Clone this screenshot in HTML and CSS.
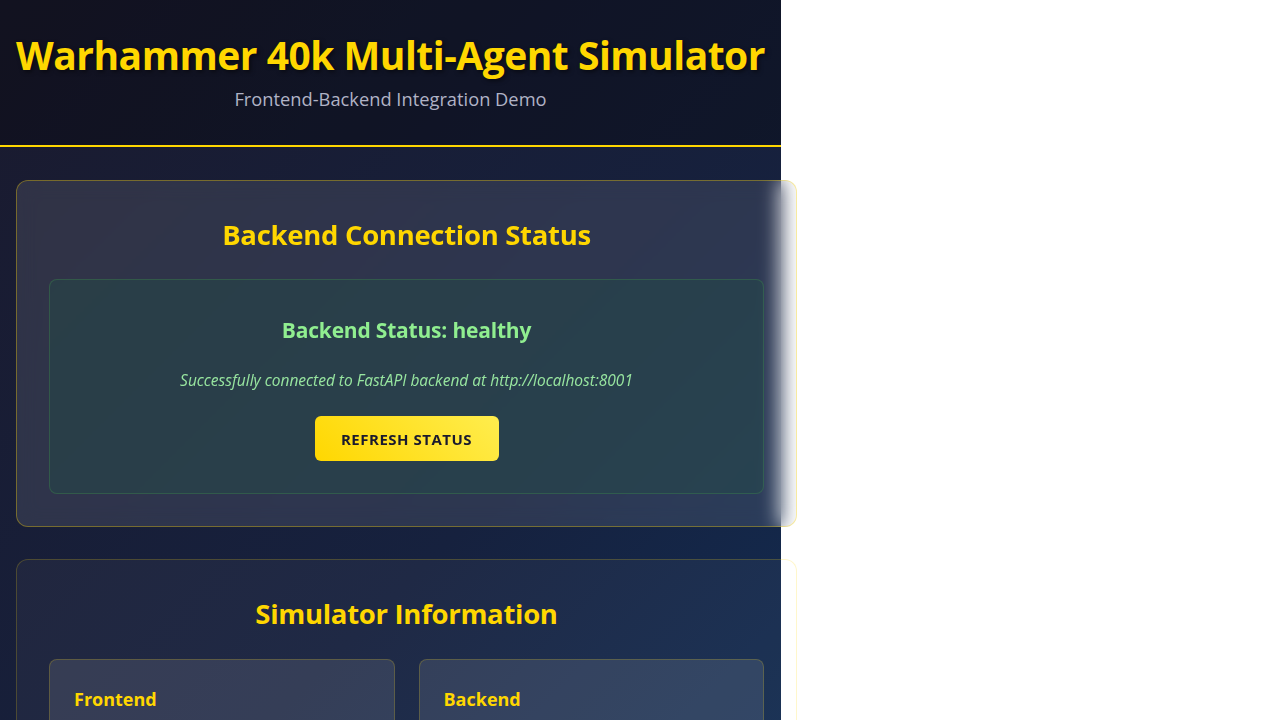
FILE: index.html
```html
<!DOCTYPE html>
<html lang="en">
<head>
<meta charset="utf-8">
<title>Warhammer 40k Multi-Agent Simulator</title>
<link rel="stylesheet" href="styles.css">
</head>
<body>
<div class="app">
  <header class="app-header">
    <h1 class="app-title">Warhammer 40k Multi-Agent Simulator</h1>
    <p class="app-subtitle">Frontend-Backend Integration Demo</p>
  </header>
  <main class="app-main">
    <section class="card card-status">
      <h2 class="card-title">Backend Connection Status</h2>
      <div class="status-box">
        <h3 class="status-title">Backend Status: healthy</h3>
        <p class="status-message">Successfully connected to FastAPI backend at http://localhost:8001</p>
        <button class="refresh-btn" type="button">Refresh Status</button>
      </div>
    </section>
    <section class="card card-info">
      <h2 class="card-title card-title-info">Simulator Information</h2>
      <div class="info-grid">
        <div class="info-box">
          <h4 class="info-title">Frontend</h4>
          <ul class="info-list">
            <li>React + TypeScript</li>
            <li>Vite dev server</li>
            <li>Axios API client</li>
          </ul>
        </div>
        <div class="info-box">
          <h4 class="info-title">Backend</h4>
          <ul class="info-list">
            <li>FastAPI + Python</li>
            <li>Uvicorn server</li>
            <li>Multi-agent engine</li>
          </ul>
        </div>
      </div>
    </section>
  </main>
</div>
</body>
</html>
```

FILE: styles.css
```css
html {
  background: #ffffff;
}

body {
  margin: 0;
  font-family: "Open Sans", "Noto Sans", "DejaVu Sans", sans-serif;
}

.app {
  width: 781px;
  min-height: 1200px;
  background: linear-gradient(135deg, #1a1a2e 0%, #16213e 50%, #0f3460 100%);
  color: #ffffff;
}

.app-header {
  background: rgba(0, 0, 0, 0.3);
  border-bottom: 2px solid #ffd700;
  padding: 31px 0 34px;
  text-align: center;
}

.app-title {
  margin: 0;
  font-size: 39px;
  line-height: 48px;
  font-weight: 700;
  color: #ffd700;
  letter-spacing: -0.5px;
  text-shadow: 2px 2px 4px rgba(0, 0, 0, 0.5);
}

.app-subtitle {
  margin: 8px 0 0;
  font-size: 18.3px;
  line-height: 24px;
  color: #b0b3c6;
}

.app-main {
  padding: 33px 0 32px 16px;
}

.card {
  width: 781px;
  box-sizing: border-box;
  border-radius: 12px;
  padding: 32px;
  margin-bottom: 32px;
}

.card-status {
  background: rgba(255, 255, 255, 0.1);
  border: 1px solid rgba(255, 215, 0, 0.35);
  backdrop-filter: blur(10px);
}

.card-info {
  background: rgba(255, 255, 255, 0.04);
  border: 1px solid rgba(255, 215, 0, 0.2);
}

.card-title {
  margin: 0 0 22px;
  font-size: 27.5px;
  line-height: 44px;
  font-weight: 700;
  color: #ffd700;
  text-align: center;
  letter-spacing: -0.3px;
}

.card-title-info {
  margin-bottom: 23px;
}

.status-box {
  background: rgba(35, 75, 70, 0.45);
  border: 1px solid rgba(76, 175, 80, 0.25);
  border-radius: 8px;
  padding: 33px 32px 32px;
  text-align: center;
}

.status-title {
  margin: 0;
  font-size: 21px;
  line-height: 34px;
  font-weight: 700;
  color: #90ee90;
  letter-spacing: -0.2px;
}

.status-message {
  margin: 23px 0 0;
  font-size: 15.5px;
  line-height: 20px;
  font-style: italic;
  color: #98e6a0;
}

.refresh-btn {
  margin-top: 26px;
  width: 184px;
  height: 45px;
  border: none;
  border-radius: 6px;
  background: linear-gradient(45deg, #ffd700, #ffed4e);
  color: #1a1a2e;
  font-family: inherit;
  font-size: 15px;
  font-weight: 700;
  text-transform: uppercase;
  letter-spacing: 0.5px;
  cursor: pointer;
}

.info-grid {
  display: grid;
  grid-template-columns: 1fr 1fr;
  gap: 24px;
}

.info-box {
  background: rgba(255, 255, 255, 0.1);
  border: 1px solid rgba(255, 215, 0, 0.2);
  border-radius: 8px;
  padding: 24px;
}

.info-title {
  margin: 0 0 12px;
  font-size: 18px;
  line-height: 30px;
  font-weight: 700;
  color: #ffd700;
}

.info-list {
  margin: 0;
  padding-left: 20px;
  color: #d0d3e0;
  font-size: 15px;
  line-height: 24px;
}
```
